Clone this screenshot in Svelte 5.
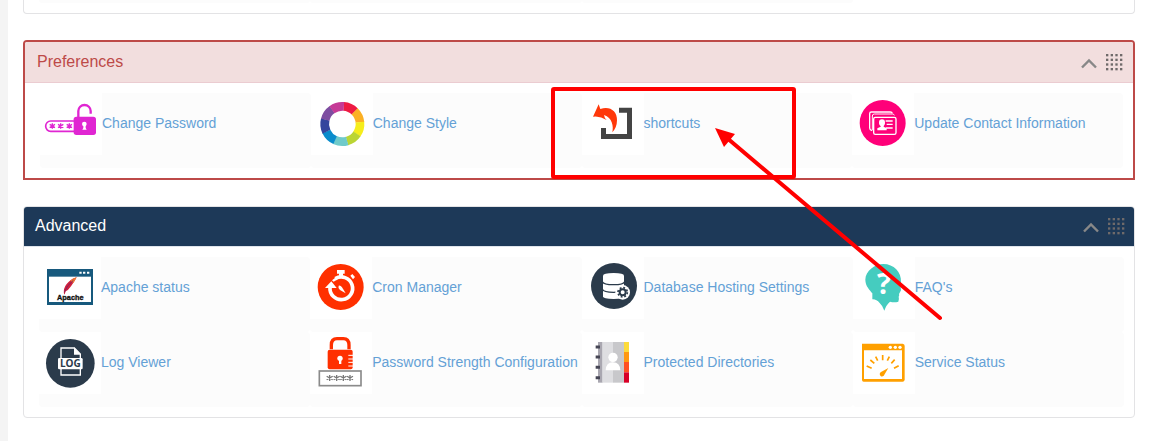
<script>
    const panels = [
        {
            id: "preferences",
            title: "Preferences",
            items: [
                { name: "Change Password", icon: "password" },
                { name: "Change Style", icon: "style" },
                { name: "shortcuts", icon: "shortcuts", marked: true },
                { name: "Update Contact Information", icon: "contact" },
            ],
        },
        {
            id: "advanced",
            title: "Advanced",
            items: [
                { name: "Apache status", icon: "apache" },
                { name: "Cron Manager", icon: "cron" },
                { name: "Database Hosting Settings", icon: "database" },
                { name: "FAQ's", icon: "faq" },
                { name: "Log Viewer", icon: "log" },
                { name: "Password Strength Configuration", icon: "strength" },
                { name: "Protected Directories", icon: "directories" },
                { name: "Service Status", icon: "service" },
            ],
        },
    ];

    const wheel = ["#ee1b43", "#fbb024", "#f6ed1c", "#bbd534", "#6fcaca", "#0a8ccc", "#34469d", "#7e4ea1", "#c53a96"];
    const dots = [0, 14, 28, 42];

    let collapsed = {};

    function toggle(id) {
        collapsed[id] = !collapsed[id];
    }

    // Six-armed star used for the password fields
    function star(x, y, r) {
        return `M${x} ${y - r}v${2 * r}M${x - r} ${y - r * 0.6}l${2 * r} ${r * 1.2}M${x - r} ${y + r * 0.6}l${2 * r} ${-r * 1.2}`;
    }
</script>

<main>
    <section class="panel tail" aria-label="Previous group">
        <div class="row">
            <span></span><span></span><span></span>
        </div>
    </section>

    {#each panels as panel}
        <section class="panel {panel.id}">
            <header>
                <h2>{panel.title}</h2>
                <button type="button" aria-label="Collapse {panel.title}" on:click={() => toggle(panel.id)}>
                    <svg width="16" height="16" viewBox="0 0 16 16">
                        <path d="M1 13.500L8 6.500L15 13.500" fill="none" stroke="#888" stroke-width="2.4" />
                    </svg>
                </button>
                <button type="button" aria-label="Move {panel.title}">
                    <svg width="17" height="17" viewBox="0 0 51 51" fill="#6f6a6a">
                        {#each dots as y}
                            {#each dots as x}
                                <rect {x} {y} width="7" height="7" />
                            {/each}
                        {/each}
                    </svg>
                </button>
            </header>

            {#if !collapsed[panel.id]}
                <ul>
                    {#each panel.items as item}
                        <li>
                            <a href="#{item.icon}">
                                <svg class="icon" viewBox="0 0 186 186" aria-hidden="true">
                                    {#if item.icon === "password"}
                                        <rect x="17" y="84" width="98" height="31" rx="15" fill="#fff" stroke="#e026d2" stroke-width="5" />
                                        <path d={star(37, 99, 8) + star(62, 99, 8) + star(88, 99, 8)} stroke="#e026d2" stroke-width="4" />
                                        <path d="M115 76V54a18.500 18 0 0 1 37 0v8" fill="none" stroke="#e026d2" stroke-width="7" />
                                        <rect x="101" y="71" width="67" height="55" rx="8" fill="#e026d2" />
                                        <circle cx="133" cy="93" r="7" fill="#fff" />
                                        <path d="M130 95h7v10l3 5h-13l3-5z" fill="#fff" />
                                    {:else if item.icon === "style"}
                                        {#each wheel as color, i}
                                            <circle cx="94" cy="93" r="53" fill="none" stroke={color} stroke-width="26" pathLength="9" stroke-dasharray="1.02 7.98" transform="rotate({-86 + i * 40} 94 93)" />
                                        {/each}
                                    {:else if item.icon === "shortcuts"}
                                        <path d="M111 44H150V138H57V105H72V123H135V59H111z" fill="#444" />
                                        <path d="M33 71L50 34L55 48C82 38 106 53 105 82C105 98 99 110 91 118C95 100 91 74 66 66Q67 75 74 81Q54 68 33 71z" fill="#ff380a" />
                                    {:else if item.icon === "contact"}
                                        <circle cx="92" cy="90" r="69" fill="#ff0079" />
                                        <g fill="none" stroke="#fff" stroke-width="4">
                                            <path d="M60 113Q53 111 53 105V62Q53 57 58 57H115Q120 57 121 61" />
                                            <path d="M127 67Q126 63 121 63H67Q61 63 61 69V112" stroke-width="3" />
                                            <rect x="65" y="73" width="67" height="51" rx="5" />
                                            <path d="M101 84h21M104 94h18M101 105h21" />
                                        </g>
                                        <ellipse cx="90" cy="89" rx="9" ry="10" fill="#fff" />
                                        <path d="M86 94h9v7l9 5v6H76v-6l10-5z" fill="#fff" />
                                    {:else if item.icon === "apache"}
                                        <rect x="24" y="36" width="138" height="108" fill="#17597d" />
                                        <rect x="30" y="59" width="126" height="76" fill="#fff" />
                                        <path d="M121 44h7v6h-7zM132 44h7v6h-7zM144 44h7v6h-7z" fill="#fff" />
                                        <path d="M75 112Q72 94 83 81Q95 66 113 61Q106 74 96 88Q88 100 80 103L77 112z" fill="#d0203c" />
                                        <path d="M94 71Q103 63 113 61Q108 71 103 78z" fill="#ef7b32" />
                                        <path d="M76 106Q82 86 103 70" fill="none" stroke="#84205f" stroke-width="3" />
                                        <text x="94" y="130" text-anchor="middle" font-size="22" font-weight="bold" fill="#111" stroke="#111">Apache</text>
                                    {:else if item.icon === "cron"}
                                        <circle cx="92" cy="90" r="69" fill="#ff3000" />
                                        <path d="M76 65A34 34 0 1 1 60 91" fill="none" stroke="#fff" stroke-width="11" />
                                        <path d="M45 93L64 73L80 93zM81 39h23v11h-5v10h-12V50h-6zM121 56l6-5 8 9-6 7zM66 70l10-8 5 6-10 6z" fill="#fff" />
                                        <path d="M86 86Q91 84 96 91L107 109L90 99Q83 93 86 86z" fill="#fff" />
                                    {:else if item.icon === "database"}
                                        <circle cx="96" cy="87" r="69" fill="#2b3b4b" />
                                        <path d="M63 56Q63 48 95 48Q126 48 126 56V118Q126 126 95 126Q63 126 63 118z" fill="#fff" />
                                        <path d="M61 74Q64 83 95 83Q125 83 128 74M61 97Q65 106 95 106Q105 106 111 104" fill="none" stroke="#2b3b4b" stroke-width="4" />
                                        <circle cx="122" cy="106" r="22" fill="#fff" />
                                        <circle cx="122" cy="106" r="14" fill="none" stroke="#2b3b4b" stroke-width="5" stroke-dasharray="5.500 5.500" />
                                        <circle cx="122" cy="106" r="9" fill="none" stroke="#2b3b4b" stroke-width="6" />
                                    {:else if item.icon === "faq"}
                                        <path d="M91 21C67 21 37 41 37 68C37 88 51 99 58 109V127Q70 126 80 138Q89 146 94 161Q100 143 111 134Q124 137 136 134Q139 126 137 119Q140 115 138 111L144 100Q141 88 144 76C146 45 122 21 91 21z" fill="#45ccbf" />
                                        <text class="mark" x="93" y="112" text-anchor="middle" font-size="88" font-weight="bold" fill="#fff">?</text>
                                    {:else if item.icon === "log"}
                                        <circle cx="94" cy="94" r="73" fill="#2b3b4b" />
                                        <path d="M66 79V48H106L124 66V129H66z" fill="none" stroke="#fff" stroke-width="4" />
                                        <path d="M105 46V68H126z" fill="#fff" />
                                        <rect x="57" y="78" width="74" height="34" rx="4" fill="#fff" />
                                        <text class="mark" x="94" y="106" text-anchor="middle" font-size="30" font-weight="bold" fill="#2b3b4b">LOG</text>
                                    {:else if item.icon === "strength"}
                                        <path d="M64 52V39Q64 20 81 20H100Q117 20 117 39V52" fill="none" stroke="#ff3000" stroke-width="10" />
                                        <rect x="53" y="53" width="75" height="59" rx="6" fill="#ff3000" />
                                        <path d="M115 70h14M115 81h14M115 91h14M115 102h14" stroke="#fff" stroke-width="3" />
                                        <circle cx="90" cy="79" r="8" fill="#fff" />
                                        <path d="M87 82h7v14h-7z" fill="#fff" />
                                        <rect x="28" y="117" width="125" height="44" fill="#fff" stroke="#8b8b8b" stroke-width="5" />
                                        <path d={star(59, 138, 9) + star(80, 138, 9) + star(100, 138, 9) + star(120, 138, 9)} stroke="#777" stroke-width="4" />
                                    {:else if item.icon === "directories"}
                                        <path d="M48 30h14v122H48z" fill="#a9a7b0" />
                                        <path d="M61 30h33v122H61z" fill="#dedee1" />
                                        <path d="M93 30h33v122H93z" fill="#c8c8cb" />
                                        <path d="M126 30h15v30h-15z" fill="#fddb3a" />
                                        <path d="M126 60h15v30h-15z" fill="#ff9811" />
                                        <path d="M126 90h15v31h-15z" fill="#ff5023" />
                                        <path d="M126 121h15v31h-15z" fill="#d80027" />
                                        <path d="M41 45h13M41 75h13M41 106h13M41 137h13" stroke="#464655" stroke-width="9" />
                                        <circle cx="93" cy="76" r="14" fill="#fff" />
                                        <path d="M71 115Q72 91 93 91Q114 91 115 115z" fill="#fff" />
                                    {:else}
                                        <path d="M27 35H149Q155 36 155 42V143Q154 149 149 149H32Q27 149 27 143z" fill="#ffa000" />
                                        <path d="M33 55H147V141H33z" fill="#fff" />
                                        <g fill="#fff">
                                            <circle cx="112" cy="46" r="5" /><circle cx="127" cy="46" r="5" /><circle cx="141" cy="46" r="5" />
                                        </g>
                                        <path d="M41 102l15 7M52 84l12 10M68 74l6 12M89 69v16M109 74l-6 12M125 83l-10 11M137 101l-14 8" stroke="#ffa000" stroke-width="5" />
                                        <path d="M106 108L94 128A7 7 0 1 1 84 120z" fill="#ffa000" />
                                    {/if}
                                </svg>
                                <span>{item.name}</span>
                            </a>
                            {#if item.marked}
                                <svg class="marker" width="394" height="236" viewBox="0 0 394 236" aria-hidden="true">
                                    <rect x="2" y="2" width="241" height="88" rx="1" />
                                    <path d="M176 51L389 231" stroke-linecap="round" />
                                    <path class="tip" d="M164 41L184 47L173 60z" />
                                </svg>
                            {/if}
                        </li>
                    {/each}
                </ul>
            {/if}
        </section>
    {/each}
</main>

<style>
    :global(body) {
        margin: 0;
        background: #fff;
    }

    main {
        box-sizing: border-box;
        min-height: 100vh;
        border-left: 8px solid #f4f4f4;
        padding: 0 21px 0 15px;
        font-family: "Liberation Sans", Arial, sans-serif;
        font-size: 14px;
        line-height: 20px;
    }

    .panel {
        margin-bottom: 26px;
        border: 1px solid #e3e3e5;
        border-radius: 4px;
    }

    .tail {
        border-top: 0;
        border-radius: 0 0 4px 4px;
        padding: 0 10px 10px 15px;
    }

    .row {
        display: grid;
        grid-template-columns: repeat(4, 1fr);
    }

    .row span {
        height: 3px;
        background: #fcfcfc;
        border-radius: 0 0 4px 4px;
    }

    header {
        display: flex;
        align-items: center;
        gap: 9px;
        padding: 9px 9px 10px 11px;
        border-bottom: 1px solid #dfe5ec;
        border-radius: 3px 3px 0 0;
        background: #1d3958;
        color: #fff;
    }

    h2 {
        flex: 1;
        margin: 0;
        font-size: 16px;
        font-weight: normal;
        line-height: 20px;
    }

    button {
        display: flex;
        margin: 0;
        padding: 0;
        border: 0;
        background: none;
        cursor: pointer;
    }

    .preferences {
        border: 2px solid #bd4a48;
        border-radius: 4px 4px 0 0;
    }

    .preferences header {
        padding: 10px 10px 10px 12px;
        border-color: #ebccd1;
        border-radius: 2px 2px 0 0;
        background: #f2dede;
        color: #bd4a48;
    }

    ul {
        display: grid;
        grid-template-columns: repeat(4, 1fr);
        margin: 0;
        padding: 10px 10px 10px 15px;
        list-style: none;
    }

    li {
        position: relative;
        height: 75px;
        border-radius: 4px;
        background: #fcfcfc;
    }

    a {
        display: flex;
        align-items: center;
        color: #64a1d6;
        text-decoration: none;
        white-space: nowrap;
    }

    a span {
        padding-bottom: 2px;
    }

    .icon {
        flex: none;
        width: 62px;
        height: 62px;
        background: #fff;
    }

    .mark {
        font-family: "Open Sans", sans-serif;
    }

    .marker {
        position: absolute;
        z-index: 1;
        top: -6px;
        left: -31px;
        pointer-events: none;
        fill: none;
        stroke: #f00;
        stroke-width: 4px;
    }

    .tip {
        fill: #f00;
        stroke: none;
    }
</style>
